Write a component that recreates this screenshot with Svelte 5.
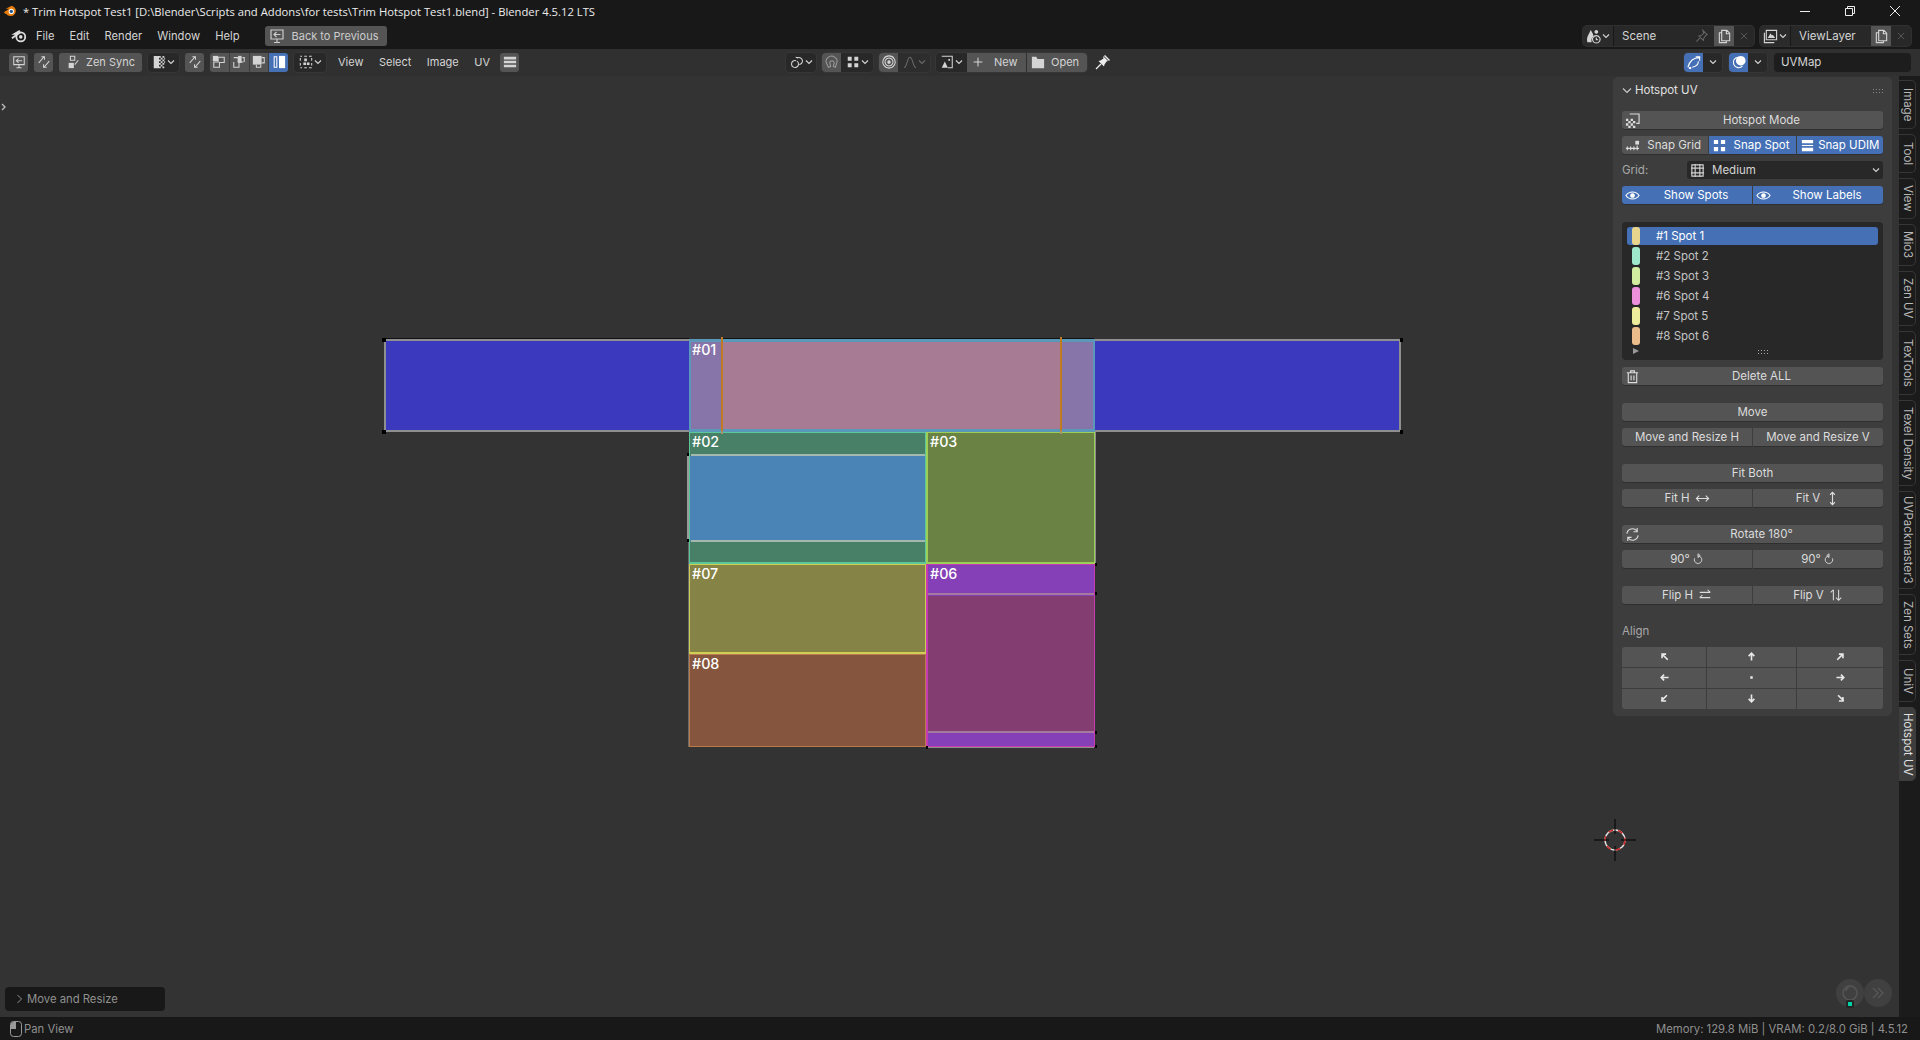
<script lang="ts">
	// icons are drawn on a 16x16 box: s = stroked part, f = filled part
	const icons: Record<string, { s?: string; f?: string }> = {
		back: { s: 'M2 2h12v9H2zM5 14.5h6M8 11v3.5M11.5 6.5H5M7.5 4L5 6.5 7.5 9' },
		sync: { s: 'M2 9l6-7M5 2h3.5v3.5M14 7l-6 7M11 14H7.5v-3.5' },
		zen: { s: 'M5 1.5h5v4.5H5zM14 6l-4 5', f: 'M3 9h6v6H3z' },
		checker: { f: 'M2 1h6v14H2zM8 1h2v2H8zM12 1h2v2h-2zM10 3h2v2h-2zM14 3h1v2h-1zM8 5h2v2H8zM12 5h2v2h-2zM10 7h2v2h-2zM14 7h1v2h-1zM8 9h2v2H8zM12 9h2v2h-2zM10 11h2v2h-2zM8 13h2v2H8zM12 13h2v2h-2z' },
		m1: { s: 'M7 2.5h7v6H8.500v5.500H2V8h5z', f: 'M1 1h6v6H1z' },
		m2: { s: 'M2 3h5v5h6M12 3h2v5M2 8v6h6V8', f: 'M7 1h4v8H7z' },
		m3: { s: 'M11 3h3v6h-3M5 11v3h5v-3', f: 'M1 1h10v10H1z' },
		m4: { s: 'M2.500 2h3v12h-3z', f: 'M8 1h7v14H8z' },
		sel: { s: 'M1.500 1.500h2M6 1.500h3M11.500 1.500h3M14.500 3.500v3M14.500 9v3M14.500 14.500h-3M9 14.500H6M3.500 14.500h-2M1.500 12V9M1.500 6.500v-3', f: 'M6 4h3v3H6zM5 8.500h3v3H5zM9 8.500h3v3H9z' },
		menu: { f: 'M1 2h14v3H1zM1 6.500h14v3H1zM1 11h14v3H1z' },
		link: { s: 'M8 3.500a4 4 0 1 1 2.500 7.300M7 6.500a4 4 0 1 0 1 .5M6.500 2.500a4.500 4.500 0 0 1 2.500 1' },
		magnet: { s: 'M4 14l-2-4a6 6 0 0 1 9-7.500 5 5 0 0 1 2.500 6L12 14l-2.500-1 1-4a2.500 2.500 0 0 0-5 0l1 4z' },
		dots: { f: 'M2 2h4.500v4.500H2zM9.500 2H14v4.500H9.500zM2 9.500h4.500V14H2zM9.500 9.500H14V14H9.500z' },
		prop: { s: 'M8 1a7 7 0 1 0 .01 0zM8 3.500a4.500 4.500 0 1 0 .01 0z', f: 'M8 6a2 2 0 1 0 .01 0z' },
		curve: { s: 'M1 14.500c4 0 3.500-12 7-12s3 12 7 12' },
		image: { s: 'M2 1.500h12v13H9', f: 'M2 14.500l3.500-7 3.500 7zM9.500 4.500h2v2h-2z' },
		plus: { s: 'M8 3v10M3 8h10' },
		folder: { f: 'M1 2h5l1.500 2.500H15V15H1z' },
		pin: { f: 'M8 2l5 5-1.500.500-2 3-.500 2L3.500 7l2-.500 3-2zM10 1l5 5-1 1-5-5z', s: 'M6 10L1 15' },
		pinline: { s: 'M9 1.500l5 5-1.500.500-2.500 3.500-.500 2.500-5-5 2.500-.500L10 5zM5.500 10.500L1.500 14.500' },
		scene: { f: 'M5 1c2 3 3 5 3 7-2 1-2.500 3-2 6H1.500C0 9 3 6 5 1zM11 1a2 2 0 1 0 .01 0z', s: 'M11 7a4 4 0 1 0 .01 0zM11 9v2.500h2' },
		copy: { s: 'M5 1.500h5.500l3 3v8H5zM10 1.500V5h3.500M5 4H2.500v10.500H10v-2' },
		cross: { s: 'M3 3l10 10M13 3L3 13' },
		layers: { s: 'M3.500 1.500h11v10h-11zM1.500 4v10.500H12', f: 'M5 9.500l3-5 1.500 2.500 1-1 2.500 3.500z' },
		uv: { s: 'M1 14c2-7 6-11 13-11M10 2h4.500v4.500M13 7c0 4-3 6-7 7', f: 'M3.500 13.500a1.500 1.500 0 1 0 .01 0z' },
		overlay: { s: 'M7 2.500a6 6 0 1 0 5 10', f: 'M10 1a5.500 5.500 0 1 0 .01 0z' },
		hotspot: { s: 'M5 1h10v10h-3', f: 'M1 6h2.500v2.500H1zM6 6h2.500v2.500H6zM3.500 8.500H6V11H3.500zM8.500 8.500H11V11H8.500zM1 11h2.500v2.500H1zM6 11h2.500v2.500H6zM3.500 13.500H6V16H3.500zM8.500 13.500H11V16H8.500z' },
		snapgrid: { s: 'M1 11h14M2.500 9v4M6 9v4M9.500 9v4M13 8v5', f: 'M11 3h4v4h-4z' },
		udim: { f: 'M2 2h12v3.500H2zM2 10.500h12V14H2z', s: 'M2 8h12' },
		grid: { s: 'M2 2h12v12H2zM5.500 1v14M10.500 1v14M1 5.500h14M1 10.500h14' },
		eye: { s: 'M1 8c3.500-5 10.500-5 14 0-3.500 5-10.500 5-14 0z', f: 'M8 5.500a2.500 2.500 0 1 0 .01 0z' },
		trash: { s: 'M2 4h12M6 4V2h4v2M3.500 4v10.500h9V4M6.500 7v5M9.500 7v5' },
		refresh: { s: 'M2 7a6 6 0 0 1 10.500-3M14 9a6 6 0 0 1-10.500 3M13 1v4h-4M3 15v-4h4' },
		lr: { s: 'M1.500 8h13M4.500 5l-3 3 3 3M11.500 5l3 3-3 3' },
		ud: { s: 'M8 1.500v13M5.500 4L8 1.500 10.500 4M5.500 12L8 14.500 10.500 12' },
		cw: { s: 'M8 4a5 5 0 1 1-4.500 3M8 1v5l3-2.500z' },
		ccw: { s: 'M8 4a5 5 0 1 0 4.500 3M8 1v5L5 3.500z' },
		fliph: { s: 'M2 5h12M11 2l3 3M14 11H2M5 8l-3 3' },
		flipv: { s: 'M5 14V2M2 5l3-3M11 2v12M8 11l3 3 3-3' },
		a0: { s: 'M5 5l7 7M5 10V5h5' },
		a1: { s: 'M8 13V4M4.500 7.500L8 4l3.500 3.500' },
		a2: { s: 'M11 5l-7 7M6 5h5v5' },
		a3: { s: 'M13 8H4M7.500 4.500L4 8l3.500 3.500' },
		a4: { f: 'M6.500 6.500h3v3h-3z' },
		a5: { s: 'M3 8h9M8.500 4.500L12 8l-3.500 3.500' },
		a6: { s: 'M11 4l-7 7M5 6v5h5' },
		a7: { s: 'M8 3v9M4.500 8.500L8 12l3.500-3.500' },
		a8: { s: 'M5 4l7 7M6 11h5V6' }
	};

	const spots = [
		{ name: '#1 Spot 1', color: '#e8d48c' },
		{ name: '#2 Spot 2', color: '#a0e8cc' },
		{ name: '#3 Spot 3', color: '#d2eca0' },
		{ name: '#6 Spot 4', color: '#ec90dc' },
		{ name: '#7 Spot 5', color: '#ecec9c' },
		{ name: '#8 Spot 6', color: '#ecbc8c' }
	];

	const tabs = [
		{ name: 'Image', h: 49 },
		{ name: 'Tool', h: 39 },
		{ name: 'View', h: 41 },
		{ name: 'Mio3', h: 42 },
		{ name: 'Zen UV', h: 55 },
		{ name: 'TexTools', h: 64 },
		{ name: 'Texel Density', h: 86 },
		{ name: 'UVPackmaster3', h: 98 },
		{ name: 'Zen Sets', h: 61 },
		{ name: 'UniV', h: 42 },
		{ name: 'Hotspot UV', h: 74 }
	];

	// uv islands sit at their own place on the canvas, page coordinates
	const islands = [
		{ x: 384, y: 339, w: 1017, h: 93, bg: '#3b39bd', bd: '#8f8f8f', b: '2px' },
		{ x: 689, y: 339, w: 406, h: 93, bg: '#8774a8', bd: '#5a97b8', b: '3px 2px', label: '#01', tx: 1, ty: -1, inner: { x: 31, y: 0, w: 340, h: 87, bg: '#a67b93' } },
		{ x: 689, y: 432, w: 237, h: 132, bg: '#487f67', bd: '#5cc79a', b: '1px 1px 2px', label: '#02', inner: { x: 0, y: 23, w: 235, h: 85, bg: '#4a83b5' } },
		{ x: 926, y: 432, w: 169, h: 132, bg: '#6a8345', bd: '#9ccf5a', b: '1px 1px 2px 2px', label: '#03' },
		{ x: 689, y: 564, w: 237, h: 90, bg: '#858345', bd: '#cfcf55', b: '1px 1px 2px', label: '#07' },
		{ x: 689, y: 654, w: 237, h: 93, bg: '#85563d', bd: '#b97a4c', b: '1px', label: '#08' },
		{ x: 926, y: 564, w: 169, h: 183, bg: '#8540b8', bd: '#c43cb0', b: '1px 1px 1px 2px', label: '#06', inner: { x: 0, y: 31, w: 166, h: 136, bg: '#843d70' } }
	];

	const marks = [
		{ x: 384, y: 338, w: 305, h: 1, c: '#111' },
		{ x: 722, y: 338, w: 372, h: 1, c: '#111' },
		{ x: 382, y: 338, w: 4, h: 4, c: '#000' },
		{ x: 382, y: 430, w: 4, h: 4, c: '#000' },
		{ x: 1400, y: 338, w: 3, h: 4, c: '#000' },
		{ x: 1400, y: 430, w: 3, h: 4, c: '#000' },
		{ x: 721, y: 337, w: 2, h: 94, c: '#c07a20' },
		{ x: 1060, y: 337, w: 2, h: 94, c: '#c07a20' },
		{ x: 721, y: 431, w: 2, h: 3, c: '#a8906a' },
		{ x: 1060, y: 431, w: 2, h: 3, c: '#a8906a' },
		{ x: 691, y: 454, w: 234, h: 2, c: '#a3b8ae' },
		{ x: 691, y: 540, w: 234, h: 2, c: '#a3b8ae' },
		{ x: 687, y: 455, w: 2, h: 85, c: '#9a9a9a' },
		{ x: 688, y: 540, w: 1, h: 207, c: '#6a6a6a' },
		{ x: 687, y: 453, w: 2, h: 3, c: '#000' },
		{ x: 687, y: 539, w: 2, h: 3, c: '#000' },
		{ x: 1095, y: 432, w: 1, h: 132, c: '#8a8a8a' },
		{ x: 928, y: 593, w: 166, h: 2, c: '#a67a9f' },
		{ x: 928, y: 731, w: 166, h: 2, c: '#a67a9f' },
		{ x: 1095, y: 563, w: 2, h: 3, c: '#000' },
		{ x: 1095, y: 592, w: 2, h: 3, c: '#000' },
		{ x: 1095, y: 731, w: 2, h: 3, c: '#000' },
		{ x: 1095, y: 745, w: 2, h: 3, c: '#000' },
		{ x: 926, y: 746, w: 2, h: 3, c: '#000' },
		{ x: 928, y: 747, w: 166, h: 1, c: '#8f8f8f' }
	];

	const alignIcons = ['a0', 'a1', 'a2', 'a3', 'a4', 'a5', 'a6', 'a7', 'a8'];
</script>

{#snippet ic(name: string, size = 14)}
	<svg class="ic" width={size} height={size} viewBox="0 0 16 16">
		{#if icons[name].s}<path class="st" d={icons[name].s} />{/if}
		{#if icons[name].f}<path class="fl" d={icons[name].f} />{/if}
	</svg>
{/snippet}

{#snippet chev()}
	<svg class="chev" width="8" height="8" viewBox="0 0 8 8"><path d="M1 2.500l3 3 3-3" /></svg>
{/snippet}

<div class="app">
	<header class="titlebar">
		<svg class="appicon" width="14" height="14" viewBox="0 0 16 16">
			<path d="M1 9.500L7 5.500 3 5.500 10 2a6 6 0 1 1-6.500 9L2.500 11z" fill="#e87d0d" />
			<circle cx="9.500" cy="8.500" r="3" fill="#fff" />
			<circle cx="9.500" cy="8.500" r="1.800" fill="#265787" />
		</svg>
		<span class="wintitle">* Trim Hotspot Test1 [D:\Blender\Scripts and Addons\for tests\Trim Hotspot Test1.blend] - Blender 4.5.12 LTS</span>
		<div class="winctl">
			<svg width="10" height="10" viewBox="0 0 10 10"><path d="M0 5.500h10" /></svg>
			<svg width="10" height="10" viewBox="0 0 10 10"><path d="M.5 2.500h7v7h-7zM2.500 2.500V.5h7v7H7.500" /></svg>
			<svg width="10" height="10" viewBox="0 0 10 10"><path d="M0 0l10 10M10 0L0 10" /></svg>
		</div>
	</header>

	<nav class="menubar">
		<svg class="logo" width="16" height="14" viewBox="0 0 18 15">
			<path d="M1 10L8 5 4 5 10 1.500" fill="none" stroke="#ddd" stroke-width="2" />
			<circle cx="11" cy="8.500" r="5" fill="none" stroke="#ddd" stroke-width="2" />
			<circle cx="11" cy="8.500" r="2" fill="#ddd" />
		</svg>
		<span>File</span><span>Edit</span><span>Render</span><span>Window</span><span>Help</span>
		<button class="btn backbtn">{@render ic('back', 16)}<span>Back to Previous</span></button>
		<div class="pickers">
			<div class="idgroup scene">
				<div class="idicon">{@render ic('scene', 15)}{@render chev()}</div>
				<div class="idfield"><span>Scene</span><span class="dim">{@render ic('pinline', 14)}</span></div>
				<div class="idbtn on">{@render ic('copy', 15)}</div>
				<div class="idbtn dim">{@render ic('cross', 10)}</div>
			</div>
			<div class="idgroup layer">
				<div class="idicon">{@render ic('layers', 15)}{@render chev()}</div>
				<div class="idfield"><span>ViewLayer</span></div>
				<div class="idbtn on">{@render ic('copy', 15)}</div>
				<div class="idbtn dim">{@render ic('cross', 10)}</div>
			</div>
		</div>
	</nav>

	<div class="toolbar">
		<div class="tleft">
			<button class="btn sq">{@render ic('back')}</button>
			<button class="btn sq">{@render ic('sync')}</button>
			<button class="btn zen">{@render ic('zen')}<span>Zen Sync</span></button>
			<button class="drop d1">{@render ic('checker')}{@render chev()}</button>
			<button class="btn sq">{@render ic('sync')}</button>
			<div class="modes">
				<button class="btn">{@render ic('m1')}</button>
				<button class="btn">{@render ic('m2')}</button>
				<button class="btn">{@render ic('m3')}</button>
				<button class="btn blue">{@render ic('m4')}</button>
			</div>
			<button class="drop d2">{@render ic('sel')}{@render chev()}</button>
			<div class="tmenu"><span>View</span><span>Select</span><span>Image</span><span>UV</span></div>
			<button class="btn sq burger">{@render ic('menu')}</button>
		</div>
		<div class="tcenter">
			<button class="drop d3">{@render ic('link')}{@render chev()}</button>
			<div class="joined j1">
				<button class="btn sq">{@render ic('magnet')}</button>
				<button class="drop flat">{@render ic('dots')}{@render chev()}</button>
			</div>
			<div class="joined j2">
				<button class="btn sq">{@render ic('prop')}</button>
				<button class="drop flat dim">{@render ic('curve')}{@render chev()}</button>
			</div>
			<div class="joined j3">
				<button class="drop flat imgdrop">{@render ic('image')}{@render chev()}</button>
				<button class="btn newbtn">{@render ic('plus')}<span>New</span></button>
				<button class="btn openbtn">{@render ic('folder')}<span>Open</span></button>
			</div>
			<span class="pinbtn">{@render ic('pin', 16)}</span>
		</div>
		<div class="tright">
			<div class="joined j4">
				<button class="btn blue sq">{@render ic('uv')}</button>
				<button class="drop flat">{@render chev()}</button>
			</div>
			<div class="joined j4">
				<button class="btn blue sq">{@render ic('overlay')}</button>
				<button class="drop flat">{@render chev()}</button>
			</div>
			<div class="mapfield">UVMap</div>
		</div>
	</div>

	<main class="main">
		<section class="viewport">
			<span class="gutter-arrow"><svg width="6" height="8" viewBox="0 0 6 8"><path d="M1 1l3 3-3 3" /></svg></span>

			{#each islands as isl}
				<div class="island" style="left:{isl.x}px;top:{isl.y - 76}px;width:{isl.w}px;height:{isl.h}px;background:{isl.bg};border-color:{isl.bd};border-width:{isl.b}">
					{#if isl.inner}
						<div class="inner" style="left:{isl.inner.x}px;top:{isl.inner.y}px;width:{isl.inner.w}px;height:{isl.inner.h}px;background:{isl.inner.bg}"></div>
					{/if}
					{#if isl.label}<span class="tag" style="left:{isl.tx ?? 2}px;top:{isl.ty ?? 0}px">{isl.label}</span>{/if}
				</div>
			{/each}
			{#each marks as m}
				<i class="mark" style="left:{m.x}px;top:{m.y - 76}px;width:{m.w}px;height:{m.h}px;background:{m.c}"></i>
			{/each}

			<svg class="cursor3d" width="42" height="42" viewBox="0 0 42 42">
				<circle cx="21" cy="21" r="10" class="c-white" />
				<circle cx="21" cy="21" r="10" class="c-red" />
				<path d="M0 21h15M27 21h15M21 0v15M21 27v15" class="c-cross" />
			</svg>

			<div class="gizmo g1"><svg width="18" height="18" viewBox="0 0 18 18"><circle cx="9" cy="9" r="7" /><path d="M4.500 7a5 5 0 0 1 3-3" /></svg><b class="dot"><i></i></b></div>
			<div class="gizmo g2"><svg width="14" height="14" viewBox="0 0 14 14"><path d="M2 2l5 5-5 5M7 2l5 5-5 5" /></svg></div>

			<div class="oppanel">
				<svg width="8" height="10" viewBox="0 0 8 10"><path d="M1.500 1l4 4-4 4" /></svg>
				<span>Move and Resize</span>
			</div>

			<aside class="panel">
				<div class="phead">
					<svg width="10" height="8" viewBox="0 0 10 8"><path d="M1 1.500l4 4 4-4" /></svg>
					<span>Hotspot UV</span>
					<span class="grip"></span>
				</div>

				<div class="group">
					<button class="pbtn pad">{@render ic('hotspot', 15)}<span class="lab">Hotspot Mode</span></button>
					<div class="row">
						<button class="pbtn pad">{@render ic('snapgrid', 15)}<span class="lab">Snap Grid</span></button>
						<button class="pbtn pad blue">{@render ic('dots', 15)}<span class="lab">Snap Spot</span></button>
						<button class="pbtn pad blue">{@render ic('udim', 15)}<span class="lab">Snap UDIM</span></button>
					</div>
					<div class="gridrow">
						<span class="gridlabel">Grid:</span>
						<div class="griddrop">{@render ic('grid', 15)}<span>Medium</span>{@render chev()}</div>
					</div>
					<div class="row">
						<button class="pbtn pad blue">{@render ic('eye', 15)}<span class="lab">Show Spots</span></button>
						<button class="pbtn pad blue">{@render ic('eye', 15)}<span class="lab">Show Labels</span></button>
					</div>
				</div>

				<div class="group">
					<div class="spotlist">
						{#each spots as spot, i}
							<div class="spot" class:sel={i === 0}>
								<i class="swatch" style="background:{spot.color}"></i>
								<span>{spot.name}</span>
							</div>
						{/each}
						<div class="listfoot">
							<svg width="6" height="6" viewBox="0 0 6 6"><path d="M0 0l6 3-6 3z" /></svg>
							<span class="grip small"></span>
						</div>
					</div>
					<button class="pbtn pad">{@render ic('trash', 15)}<span class="lab">Delete ALL</span></button>
				</div>

				<div class="group">
					<button class="pbtn"><span class="lab">Move</span></button>
					<div class="row">
						<button class="pbtn"><span class="lab">Move and Resize H</span></button>
						<button class="pbtn"><span class="lab">Move and Resize V</span></button>
					</div>
				</div>

				<div class="group">
					<button class="pbtn"><span class="lab">Fit Both</span></button>
					<div class="row">
						<button class="pbtn"><span class="lab">Fit H {@render ic('lr', 15)}</span></button>
						<button class="pbtn"><span class="lab">Fit V {@render ic('ud', 15)}</span></button>
					</div>
				</div>

				<div class="group">
					<button class="pbtn pad">{@render ic('refresh', 15)}<span class="lab">Rotate 180°</span></button>
					<div class="row">
						<button class="pbtn"><span class="lab tight">90° {@render ic('cw', 12)}</span></button>
						<button class="pbtn"><span class="lab tight">90° {@render ic('ccw', 12)}</span></button>
					</div>
				</div>

				<div class="row">
					<button class="pbtn"><span class="lab">Flip H {@render ic('fliph', 14)}</span></button>
					<button class="pbtn"><span class="lab">Flip V {@render ic('flipv', 14)}</span></button>
				</div>

				<div class="group">
					<div class="alignlabel">Align</div>
					<div class="aligngrid">
						{#each alignIcons as a}
							<button class="cell">{@render ic(a, 13)}</button>
						{/each}
					</div>
				</div>
			</aside>
		</section>

		<div class="tabs">
			{#each tabs as tab}
				<div class="tab" class:active={tab.name === 'Hotspot UV'} style="height:{tab.h}px"><span>{tab.name}</span></div>
			{/each}
		</div>
	</main>

	<footer class="status">
		<svg class="mouse" width="12" height="16" viewBox="0 0 12 16">
			<rect x=".5" y=".5" width="11" height="15" rx="3" fill="none" stroke="#999" />
			<path d="M1 3.500a2.500 2.500 0 0 1 2.500-2.500H6v7H1z" fill="#999" />
		</svg>
		<span>Pan View</span>
		<span class="stats">Memory: 129.8 MiB | VRAM: 0.2/8.0 GiB | 4.5.12</span>
	</footer>
</div>

<style>
	:global(body) {
		margin: 0;
		background: #333;
	}
	.app {
		width: 1920px;
		height: 1040px;
		display: flex;
		flex-direction: column;
		overflow: hidden;
		font-family: Inter, 'Noto Sans', sans-serif;
		font-size: 11.5px;
		color: #d4d4d4;
	}
	button {
		font: inherit;
		color: inherit;
		border: 0;
		padding: 0;
		margin: 0;
		display: flex;
		align-items: center;
		justify-content: center;
	}
	.ic {
		flex: none;
		display: block;
	}
	.ic .st {
		fill: none;
		stroke: currentColor;
		stroke-width: 1.2;
	}
	.ic .fl {
		fill: currentColor;
	}
	.chev path {
		fill: none;
		stroke: currentColor;
		stroke-width: 1.1;
	}
	.dim {
		opacity: 0.35;
	}

	/* window chrome */
	.titlebar {
		height: 24px;
		background: #181818;
		display: flex;
		align-items: center;
		padding-left: 3px;
		padding-bottom: 2px;
		box-sizing: border-box;
		flex: none;
	}
	.appicon {
		margin-right: 6px;
	}
	.wintitle {
		font-family: 'Open Sans', sans-serif;
		font-size: 11.25px;
		color: #ececec;
		white-space: nowrap;
	}
	.winctl {
		margin-left: auto;
		display: flex;
		gap: 35px;
		padding-right: 20px;
		margin-top: -1px;
	}
	.winctl path {
		fill: none;
		stroke: #eee;
		stroke-width: 1;
	}
	.menubar {
		height: 25px;
		background: #181818;
		display: flex;
		align-items: center;
		gap: 15px;
		padding-left: 11px;
		padding-bottom: 1px;
		box-sizing: border-box;
		flex: none;
		font-size: 11.2px;
	}
	.logo {
		margin-right: -6px;
	}
	.btn {
		background: #545454;
		border-radius: 3px;
		box-sizing: border-box;
		height: 19px;
	}
	.blue {
		background: #4570b6;
		color: #fff;
	}
	.backbtn {
		height: 20px;
		width: 122px;
		margin-left: 10px;
		gap: 7px;
		color: #ccc;
		justify-content: flex-start;
		padding-left: 4px;
		font-size: 11px;
	}
	.pickers {
		margin-left: auto;
		display: flex;
		gap: 6px;
		padding-right: 9px;
		font-size: 11.5px;
	}
	.idgroup {
		display: flex;
		height: 20px;
		background: #282828;
		border-radius: 4px;
		overflow: hidden;
		box-shadow: 0 0 0 1px #303030;
	}
	.idicon {
		display: flex;
		align-items: center;
		justify-content: center;
		gap: 1px;
		width: 31px;
		background: #2b2b2b;
		border-right: 1px solid #181818;
		box-sizing: border-box;
	}
	.idfield {
		display: flex;
		align-items: center;
		justify-content: space-between;
		padding: 0 5px 0 8px;
		box-sizing: border-box;
	}
	.scene .idfield {
		width: 100px;
	}
	.layer .idfield {
		width: 80px;
	}
	.idbtn {
		width: 20px;
		display: flex;
		align-items: center;
		justify-content: center;
	}
	.idbtn.on {
		background: #545454;
	}

	/* editor header */
	.toolbar {
		height: 27px;
		background: #303030;
		display: flex;
		align-items: center;
		flex: none;
		padding: 0 9px 1px;
		box-sizing: border-box;
		font-size: 11px;
	}
	.tleft,
	.tcenter,
	.tright {
		display: flex;
		align-items: center;
	}
	.tleft {
		gap: 6px;
	}
	.tcenter {
		margin-left: 267px;
		gap: 6px;
	}
	.tright {
		margin-left: auto;
		gap: 7px;
		font-size: 11.5px;
	}
	.sq {
		width: 19px;
	}
	.zen {
		width: 83px;
		gap: 6px;
	}
	.drop {
		background: #282828;
		height: 19px;
		border-radius: 4px;
		gap: 1px;
		box-shadow: 0 0 0 1px #363636;
	}
	.d1 {
		width: 31px;
	}
	.d2 {
		width: 32px;
	}
	.d3 {
		width: 30px;
	}
	.modes {
		display: flex;
		width: 78px;
		gap: 0;
	}
	.modes .btn {
		flex: 1;
		border-radius: 0;
		border-right: 1px solid #3c3c3c;
	}
	.modes .btn:first-child {
		border-radius: 3px 0 0 3px;
	}
	.modes .btn:last-child {
		border-radius: 0 3px 3px 0;
		border-right: 0;
	}
	.tmenu {
		display: flex;
		justify-content: space-between;
		width: 152px;
		margin-left: 6px;
	}
	.burger {
		margin-left: 4px;
	}
	.joined {
		display: flex;
		border-radius: 4px;
		overflow: hidden;
		box-shadow: 0 0 0 1px #363636;
	}
	.joined .btn,
	.joined .drop {
		border-radius: 0;
		box-shadow: none;
	}
	.j1 .btn {
		color: #9a9a9a;
	}
	.flat {
		width: 32px;
	}
	.j3 .imgdrop {
		width: 31px;
	}
	.newbtn,
	.openbtn {
		width: 60px;
		gap: 8px;
	}
	.newbtn {
		border-right: 1px solid #303030 !important;
		justify-content: flex-start;
		padding-left: 4px;
		gap: 9px;
	}
	.openbtn {
		justify-content: flex-start;
		padding-left: 4px;
		gap: 6px;
	}
	.pinbtn {
		margin-left: 2px;
		color: #eee;
	}
	.j4 .flat {
		width: 19px;
	}
	.mapfield {
		width: 137px;
		height: 19px;
		line-height: 19px;
		background: #1d1d1d;
		border-radius: 4px;
		padding-left: 7px;
		box-sizing: border-box;
	}

	.main {
		flex: 1;
		display: flex;
		min-height: 0;
	}
	.viewport {
		flex: 1;
		position: relative;
		background: #333;
	}
	.gutter-arrow {
		position: absolute;
		left: 1px;
		top: 24px;
	}
	.gutter-arrow path {
		fill: none;
		stroke: #bbb;
		stroke-width: 1.4;
	}

	/* uv canvas */
	.island {
		position: absolute;
		box-sizing: border-box;
		border-style: solid;
	}
	.inner {
		position: absolute;
	}
	.tag {
		position: absolute;
		font-size: 14.3px;
		font-weight: 500;
		line-height: 17px;
		color: #fff;
	}
	.mark {
		position: absolute;
	}
	.cursor3d {
		position: absolute;
		left: 1594px;
		top: 743px;
	}
	.c-white,
	.c-red {
		fill: none;
		stroke-width: 1.4;
	}
	.c-white {
		stroke: #e6e6e6;
	}
	.c-red {
		stroke: #d02020;
		stroke-dasharray: 5 5;
	}
	.c-cross {
		stroke: #000;
		stroke-width: 1;
	}
	.gizmo {
		position: absolute;
		width: 28px;
		height: 28px;
		border-radius: 50%;
		background: #404040;
		top: 903px;
		display: flex;
		align-items: center;
		justify-content: center;
	}
	.g1 {
		left: 1836px;
	}
	.g2 {
		left: 1864px;
	}
	.gizmo path,
	.gizmo circle {
		fill: none;
		stroke: #575757;
		stroke-width: 1.4;
	}
	.dot {
		position: absolute;
		left: 10px;
		bottom: -1px;
		width: 8px;
		height: 8px;
		background: #252525;
		border-radius: 2px;
		display: flex;
		align-items: center;
		justify-content: center;
	}
	.dot i {
		width: 4px;
		height: 4px;
		background: #00d4a4;
	}
	.oppanel {
		position: absolute;
		left: 5px;
		bottom: 6px;
		width: 160px;
		height: 24px;
		background: #181818;
		border-radius: 4px;
		display: flex;
		align-items: center;
		gap: 3px;
		padding-left: 11px;
		box-sizing: border-box;
		color: #909090;
		font-size: 11.3px;
	}
	.oppanel path {
		fill: none;
		stroke: #909090;
	}

	/* sidebar panel */
	.panel {
		position: absolute;
		left: 1613px;
		top: 1px;
		width: 279px;
		box-sizing: border-box;
		padding: 0 9px 7px;
		background: #3d3d3d;
		border-radius: 5px;
		display: flex;
		flex-direction: column;
		gap: 18px;
	}
	.phead {
		height: 34px;
		margin-bottom: -18px;
		display: flex;
		align-items: flex-start;
		padding-top: 6px;
		box-sizing: border-box;
		gap: 3px;
		color: #e0e0e0;
	}
	.phead svg {
		margin-top: 4px;
	}
	.phead path {
		fill: none;
		stroke: #ccc;
		stroke-width: 1.1;
	}
	.grip {
		margin-left: auto;
		margin-top: 5px;
		width: 11px;
		height: 5px;
		background-image: radial-gradient(circle, #888 0.7px, transparent 0.8px);
		background-size: 3px 3px;
	}
	.group {
		display: flex;
		flex-direction: column;
		gap: 7px;
	}
	.row {
		display: flex;
		gap: 1px;
	}
	.pbtn {
		height: 18px;
		background: #545454;
		border-radius: 3px;
		box-shadow: 0 1px 0 #2f2f2f;
		box-sizing: border-box;
		min-width: 0;
		color: #dcdcdc;
	}
	.pbtn.pad {
		padding-left: 3px;
	}
	.pbtn.blue {
		background: #4570b6;
		color: #fff;
	}
	.row .pbtn {
		flex: 1 1 0;
		border-radius: 0;
	}
	.row .pbtn:first-child {
		border-radius: 3px 0 0 3px;
	}
	.row .pbtn:last-child {
		border-radius: 0 3px 3px 0;
	}
	.lab {
		flex: 1;
		text-align: center;
		display: flex;
		align-items: center;
		justify-content: center;
		gap: 5px;
		white-space: nowrap;
	}
	.lab.tight {
		gap: 2px;
	}
	.gridrow {
		display: flex;
		align-items: center;
		height: 18px;
	}
	.gridlabel {
		width: 65px;
		color: #a8a8a8;
	}
	.griddrop {
		flex: 1;
		height: 18px;
		background: #282828;
		border-radius: 3px;
		display: flex;
		align-items: center;
		padding: 0 3px;
		gap: 7px;
	}
	.griddrop .chev {
		margin-left: auto;
	}
	.spotlist {
		height: 138px;
		background: #282828;
		border-radius: 4px;
		padding: 5px;
		box-sizing: border-box;
		display: flex;
		flex-direction: column;
		gap: 2px;
		position: relative;
	}
	.spot {
		height: 18px;
		flex: none;
		display: flex;
		align-items: center;
		padding-left: 5px;
		border-radius: 3px;
		color: #c4c4c4;
		gap: 16px;
	}
	.spot.sel {
		background: #4570b6;
		color: #fff;
	}
	.swatch {
		width: 8px;
		height: 18px;
		border-radius: 3px;
		box-sizing: border-box;
	}
	.listfoot {
		height: 8px;
		display: flex;
		align-items: center;
		padding-left: 6px;
		margin-top: 0;
		position: relative;
	}
	.listfoot path {
		fill: #999;
	}
	.grip.small {
		position: absolute;
		left: 130px;
		top: 2px;
		margin: 0;
		width: 12px;
		height: 6px;
		background-image: radial-gradient(circle, #aaa 0.7px, transparent 0.8px);
	}
	.alignlabel {
		height: 18px;
		line-height: 18px;
		color: #a8a8a8;
	}
	.aligngrid {
		display: grid;
		grid-template-columns: 84px 89px 1fr;
		grid-auto-rows: 20px;
		gap: 1px;
		border-radius: 3px;
		overflow: hidden;
	}
	.cell {
		background: #545454;
		color: #e8e8e8;
		padding-bottom: 2px;
	}
	.cell .ic .st {
		stroke-width: 2;
	}

	/* region tabs */
	.tabs {
		width: 21px;
		flex: none;
		background: #1b1b1b;
		display: flex;
		flex-direction: column;
		gap: 5px;
		padding-top: 4px;
		box-sizing: border-box;
	}
	.tab {
		width: 17px;
		box-sizing: border-box;
		border: 1px solid #363636;
		border-left: 0;
		border-radius: 0 5px 5px 0;
		display: flex;
		align-items: center;
		justify-content: center;
		color: #b8b8b8;
	}
	.tab span {
		writing-mode: vertical-rl;
		white-space: nowrap;
		line-height: 1;
	}
	.tab.active {
		background: #3d3d3d;
		border-color: #3d3d3d;
		color: #e0e0e0;
	}

	.status {
		height: 23px;
		flex: none;
		background: #181818;
		display: flex;
		align-items: center;
		padding: 0 12px 0 10px;
		gap: 2px;
		color: #8f8f8f;
		font-size: 11.3px;
	}
	.stats {
		margin-left: auto;
	}
</style>
